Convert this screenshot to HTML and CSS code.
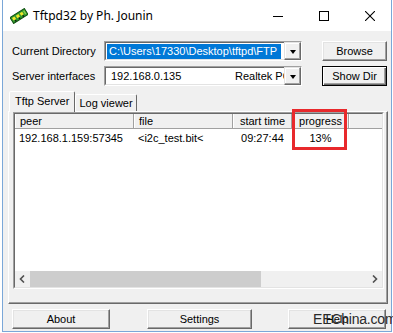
FILE: index.html
```html
<!DOCTYPE html>
<html>
<head>
<meta charset="utf-8">
<title>Tftpd32</title>
<link rel="stylesheet" href="styles.css">
</head>
<body>
<div class="win">
  <div class="titlebar">
    <svg class="appicon" width="18" height="16" viewBox="0 0 18 16">
      <g transform="rotate(-32 9 8)">
        <rect x="0.5" y="4.5" width="17" height="7" fill="#2f9a2f" stroke="#0f4f0f"/>
        <rect x="2" y="6" width="3" height="3" fill="#f2e62a"/>
        <rect x="6.5" y="6" width="3" height="3" fill="#f2e62a"/>
        <rect x="11" y="6" width="3" height="3" fill="#f2e62a"/>
        <rect x="3" y="9.5" width="1.5" height="1.5" fill="#111"/>
        <rect x="7.5" y="9.5" width="1.5" height="1.5" fill="#111"/>
        <rect x="12" y="9.5" width="1.5" height="1.5" fill="#111"/>
        <rect x="15" y="6" width="1.5" height="4" fill="#8ed04a"/>
      </g>
    </svg>
    <span class="title">Tftpd32 by Ph. Jounin</span>
    <div class="controls">
      <div class="ctl"><svg width="10" height="10"><line x1="0" y1="5.5" x2="10" y2="5.5" stroke="#000"/></svg></div>
      <div class="ctl"><svg width="10" height="10"><rect x="0.5" y="0.5" width="9" height="9" fill="none" stroke="#000"/></svg></div>
      <div class="ctl"><svg width="10" height="10"><path d="M0 0L10 10M10 0L0 10" stroke="#000" stroke-width="1.1"/></svg></div>
    </div>
  </div>
  <div class="client">
    <div class="form">
      <span class="lbl">Current Directory</span>
      <div class="combo">
        <div class="combo-text"><span class="sel">C:\Users\17330\Desktop\tftpd\FTP</span></div>
        <div class="dd"><i class="arrow"></i></div>
      </div>
      <button class="btn side">Browse</button>
      <span class="lbl">Server interfaces</span>
      <div class="combo">
        <div class="combo-text"><span class="ip">192.168.0.135</span><span class="nic">Realtek PCIe GbE Family Controller</span></div>
        <div class="dd"><i class="arrow"></i></div>
      </div>
      <button class="btn side default">Show Dir</button>
    </div>
    <div class="tabs">
      <div class="tab active">Tftp Server</div>
      <div class="tab">Log viewer</div>
    </div>
    <div class="panel">
      <div class="list">
        <div class="list-in">
          <div class="lv-head">
            <div class="hc c-peer">peer</div>
            <div class="hc c-file">file</div>
            <div class="hc c-time">start time</div>
            <div class="hc c-prog">progress</div>
            <div class="hc c-fill"></div>
          </div>
          <div class="lv-body">
            <div class="lv-row">
              <div class="cell c-peer">192.168.1.159:57345</div>
              <div class="cell c-file">&lt;i2c_test.bit&lt;</div>
              <div class="cell c-time">09:27:44</div>
              <div class="cell c-prog">13%</div>
            </div>
          </div>
          <div class="hscroll">
            <div class="sb-arrow"><svg width="7" height="8"><path d="M5 0.5L1.5 4L5 7.5" fill="none" stroke="#505050" stroke-width="1.6"/></svg></div>
            <div class="sb-thumb"></div>
            <div class="sb-track"></div>
            <div class="sb-arrow"><svg width="7" height="8"><path d="M2 0.5L5.5 4L2 7.5" fill="none" stroke="#505050" stroke-width="1.6"/></svg></div>
          </div>
        </div>
      </div>
    </div>
    <div class="bottom">
      <button class="btn b-about">About</button>
      <button class="btn b-settings">Settings</button>
      <button class="btn b-help">Help</button>
    </div>
  </div>
  <div class="redbox"></div>
  <div class="watermark">EEChina.com</div>
</div>
</body>
</html>
```

FILE: styles.css
```css
* { box-sizing: border-box; }
html, body { margin: 0; padding: 0; background: #fff; }
body {
  font-family: "Liberation Sans", Arial, sans-serif;
  font-size: 11px;
  color: #000;
}
.win {
  position: relative;
  margin-left: 2px;
  width: 390px;
  height: 332px;
  border: 1px solid #7aa7d8;
  border-top: none;
  background: #f0f0f0;
  display: flex;
  flex-direction: column;
}
.titlebar {
  height: 31px;
  background: #fff;
  display: flex;
  align-items: center;
  flex: none;
}
.appicon { margin-left: 7px; margin-top: 1px; }
.title {
  margin-left: 5px;
  font-family: "Segoe UI", "Noto Sans", sans-serif;
  font-size: 12px;
  color: #000;
}
.controls { margin-left: auto; display: flex; height: 31px; }
.ctl {
  width: 46px;
  height: 31px;
  padding-left: 4px;
  display: flex;
  align-items: center;
  justify-content: center;
}
.client { flex: 1; display: flex; flex-direction: column; }
.form {
  margin: 10px 4px 0 9px;
  display: grid;
  grid-template-columns: 92px 198px 1fr;
  grid-template-rows: 20px 20px;
  row-gap: 5px;
  align-items: center;
}
.lbl { white-space: nowrap; }
.combo {
  height: 20px;
  border: 1px solid;
  border-color: #a0a0a0 #fff #fff #a0a0a0;
  display: flex;
}
.combo-text {
  flex: 1;
  border: 1px solid;
  border-right: none;
  border-color: #696969 #e3e3e3 #e3e3e3 #696969;
  background: #fff;
  padding: 1px 0 0 1px;
  display: flex;
  overflow: hidden;
  white-space: nowrap;
  line-height: 14px;
}
.sel { background: #0078d7; color: #fff; padding: 0 4px 0 2px; }
.ip { padding-left: 4px; width: 128px; flex: none; }
.nic { flex: 1; min-width: 0; overflow: hidden; }
.dd {
  width: 17px;
  flex: none;
  background: #f0f0f0;
  border: 1px solid;
  border-color: #e3e3e3 #696969 #696969 #e3e3e3;
  box-shadow: inset -1px -1px #a0a0a0, inset 1px 1px #fff;
  display: flex;
  align-items: center;
  justify-content: center;
}
.arrow {
  width: 0; height: 0;
  border-left: 3.5px solid transparent;
  border-right: 3.5px solid transparent;
  border-top: 4px solid #000;
  margin-top: 1px;
}
.btn {
  font: inherit;
  color: #000;
  padding: 0;
  height: 20px;
  background: #f0f0f0;
  border: 1px solid;
  border-color: #fff #696969 #696969 #fff;
  box-shadow: inset -1px -1px #a0a0a0, inset 1px 1px #e3e3e3;
}
.btn.side { width: 65px; justify-self: end; }
.btn.default {
  border-color: #000;
  box-shadow: inset 1px 1px #fff, inset -1px -1px #696969, inset -2px -2px #a0a0a0;
}
.tabs {
  margin: 5px 0 0 6px;
  height: 20px;
  display: flex;
  align-items: flex-end;
  position: relative;
  z-index: 1;
}
.tab {
  height: 17px;
  padding: 2px 3px 0 3px;
  border: 1px solid;
  border-bottom: none;
  border-color: #fff #696969 transparent #fff;
  border-radius: 2px 2px 0 0;
  background: #f0f0f0;
  white-space: nowrap;
}
.tab.active {
  height: 21px;
  margin-bottom: -1px;
  padding: 3px 5px 0 5px;
}
.panel {
  margin: 0 3px 0 5px;
  height: 193px;
  border: 1px solid;
  border-color: #fff #696969 #696969 #fff;
  box-shadow: inset -1px -1px #a0a0a0;
  padding: 0 3px 0 4px;
}
.list {
  height: 177px;
  border: 1px solid;
  border-color: #a0a0a0 #fff #fff #a0a0a0;
}
.list-in {
  height: 100%;
  border: 1px solid;
  border-color: #696969 #e3e3e3 #e3e3e3 #696969;
  background: #fff;
  display: flex;
  flex-direction: column;
}
.lv-head {
  height: 15px;
  flex: none;
  display: flex;
  background: #f0f0f0;
  border-bottom: 1px solid #a0a0a0;
}
.hc {
  height: 100%;
  border-left: 1px solid #fff;
  border-right: 1px solid #a0a0a0;
  padding: 1px 0 0 4px;
  line-height: 12px;
  white-space: nowrap;
}
.hc.c-fill { flex: 1; border-right: none; }
.c-peer { width: 119px; flex: none; }
.c-file { width: 99px; flex: none; }
.c-time { width: 59px; flex: none; text-align: center; padding-left: 0; }
.c-prog { width: 57px; flex: none; text-align: center; padding-left: 0; }
.lv-body { flex: 1; }
.lv-row { display: flex; height: 17px; align-items: center; }
.cell { padding-left: 4px; white-space: nowrap; }
.cell.c-time, .cell.c-prog { padding-left: 0; }
.hscroll {
  height: 16px;
  flex: none;
  display: flex;
  background: #f0f0f0;
}
.sb-arrow {
  width: 15px;
  display: flex;
  align-items: center;
  justify-content: center;
}
.sb-thumb { width: 231px; background: #cdcdcd; }
.sb-track { flex: 1; }
.bottom {
  margin: 5px 0 0 9px;
  display: flex;
}
.b-about { width: 98px; }
.b-settings { width: 105px; margin-left: 37px; }
.b-help { width: 98px; margin-left: 36px; }
.redbox {
  position: absolute;
  left: 289px;
  top: 109px;
  width: 55px;
  height: 41px;
  border: 3px solid #e8292c;
}
.watermark {
  position: absolute;
  left: 310px;
  top: 311px;
  font-family: "Liberation Sans Narrow", "Liberation Sans", sans-serif;
  font-size: 14px;
  line-height: 16px;
  color: #2a2a2a;
  letter-spacing: -0.2px;
}
```
